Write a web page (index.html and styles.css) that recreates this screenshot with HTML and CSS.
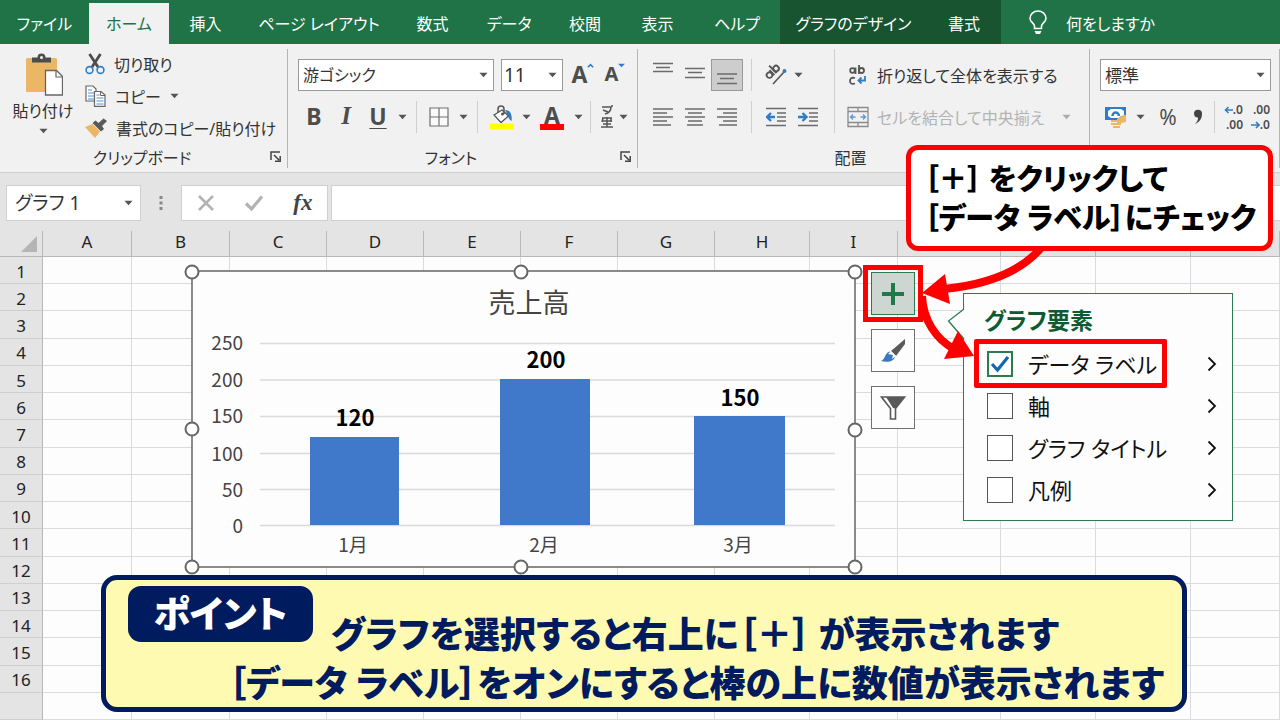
FILE: index.html
```html
<!DOCTYPE html>
<html lang="ja">
<head>
<meta charset="utf-8">
<title>グラフ要素 - データ ラベル</title>
<link rel="stylesheet" href="styles.css">
</head>
<body>
<svg class="defs" aria-hidden="true">
  <symbol id="caret" viewBox="0 0 10 6"><path d="M0.5 0.5h9L5 5.5z" fill="currentColor"/></symbol>
  <symbol id="launcher" viewBox="0 0 12 12"><path d="M1 9V1h9M4 4l5 5M10.200 5v5.200H5" fill="none" stroke="#444" stroke-width="1.500"/></symbol>
  <symbol id="chev" viewBox="0 0 10 16"><path d="M1.500 1.500L8 8l-6.500 6.500" fill="none" stroke="#111" stroke-width="1.800"/></symbol>
</svg>

<nav class="tabs" aria-label="リボン タブ">
  <button>ファイル</button>
  <button class="active">ホーム</button>
  <button>挿入</button>
  <button>ページ レイアウト</button>
  <button>数式</button>
  <button>データ</button>
  <button>校閲</button>
  <button>表示</button>
  <button>ヘルプ</button>
  <button class="context">グラフのデザイン</button>
  <button class="context">書式</button>
  <button class="tell">
    <svg width="20" height="26" viewBox="0 0 20 26" aria-hidden="true"><path d="M6.500 18.500v-2.500C6.500 13.500 2 12 2 8.500a8 7.500 0 0 1 16 0C18 12 13.500 13.500 13.500 16v2.500z" fill="none" stroke="#fff" stroke-width="1.600"/><path d="M6.500 21h7l-1.500 3h-4z" fill="#fff"/></svg>
    何をしますか
  </button>
</nav>

<header class="ribbon">
  <section class="group clip">
    <div class="clip-body">
      <button class="paste">
        <svg width="40" height="44" viewBox="0 0 40 44" aria-hidden="true"><rect x="3" y="5" width="31" height="34" rx="1.500" fill="#ebb765"/><path d="M9 9.500V4.500h5.500a4 4 0 0 1 8 0H28v5z" fill="#4d4d4d"/><circle cx="18.500" cy="4.500" r="1.500" fill="#f1f1f1"/><path d="M22.500 17.500h11l6 6V42h-17z" fill="#fff" stroke="#666" stroke-width="1.300"/><path d="M33 17.500V24h6.500" fill="none" stroke="#666" stroke-width="1.200"/></svg>
        <span>貼り付け</span>
        <svg class="caret"><use href="#caret"/></svg>
      </button>
      <div class="clip-list">
        <button><svg width="20" height="22" viewBox="0 0 20 22" aria-hidden="true"><path d="M4.500 1l8.500 13M15.500 1L7 14" stroke="#4d4d4d" stroke-width="2.800" fill="none"/><circle cx="4.500" cy="17" r="3.400" fill="none" stroke="#2f7dc8" stroke-width="1.600"/><circle cx="15.500" cy="17" r="3.400" fill="none" stroke="#2f7dc8" stroke-width="1.600"/></svg>切り取り</button>
        <button><svg width="21" height="22" viewBox="0 0 21 22" aria-hidden="true"><path d="M1 1h7l3 3v12H1z" fill="#fff" stroke="#666" stroke-width="1.200"/><path d="M3 5h4M3 8h6M3 11h6M3 14h6" stroke="#4a90d6"/><path d="M9.500 6.500H16l4 3.500v11.400H9.500z" fill="#fff" stroke="#666" stroke-width="1.200"/><path d="M15.500 6.500V10.500H20" fill="none" stroke="#666"/><path d="M11.500 10h3M11.500 13h7M11.500 16h7M11.500 19h7" stroke="#4a90d6"/></svg>コピー<svg class="caret"><use href="#caret"/></svg></button>
        <button><svg width="22" height="22" viewBox="0 0 22 22" aria-hidden="true"><path d="M0 10l7.500-3 7.500 7.500L10 21z" fill="#ebb765"/><path d="M7.500 6l3-2.500 3 2.500L18.500 1.500 22 4l-5 5 2 3-3 2.500z" fill="#595959"/></svg>書式のコピー/貼り付け</button>
      </div>
    </div>
    <div class="foot"><span>クリップボード</span><svg class="launch"><use href="#launcher"/></svg></div>
  </section>

  <section class="group font">
    <div class="rows">
      <div class="row">
        <span class="combo font-name"><select aria-label="フォント"><option>游ゴシック</option></select><svg class="caret"><use href="#caret"/></svg></span>
        <span class="combo font-size"><select aria-label="フォント サイズ"><option>11</option></select><svg class="caret"><use href="#caret"/></svg></span>
        <button class="tool glyph" aria-label="フォント サイズの拡大">A<svg class="tick" viewBox="0 0 8 5"><path d="M1 4.500l3-3 3 3" fill="none" stroke="#2f7dc8" stroke-width="1.800"/></svg></button>
        <button class="tool glyph small" aria-label="フォント サイズの縮小">A<svg class="tick" viewBox="0 0 8 5"><path d="M0 .5h8l-4 4z" fill="#2f7dc8"/></svg></button>
      </div>
      <div class="row">
        <button class="tool glyph">B</button>
        <button class="tool glyph italic">I</button>
        <button class="tool glyph under">U</button>
        <button class="drop wide" aria-label="下線の種類"><svg class="caret"><use href="#caret"/></svg></button>
        <i class="sep"></i>
        <button class="tool" aria-label="罫線"><svg width="20" height="20" viewBox="0 0 20 20"><path d="M1 1h18v18H1zM10 1v18M1 10h18" fill="#fafafa" stroke="#707070" stroke-width="1.200"/></svg></button>
        <button class="drop wide" aria-label="罫線の種類"><svg class="caret"><use href="#caret"/></svg></button>
        <i class="sep"></i>
        <button class="tool w36" aria-label="塗りつぶしの色"><svg width="24" height="26" viewBox="0 0 24 26"><path d="M15 6c5 0 7.500 4 6.500 11-2-1-3-3-4-6z" fill="#2f7dc8"/><path d="M4 11l8-5 6.500 6-7.500 6.500z" fill="#fff" stroke="#555" stroke-width="1.300"/><path d="M8 8.500V5a3 3 0 0 1 6 0v5" fill="none" stroke="#555" stroke-width="1.500"/><circle cx="12.500" cy="10" r="1.500" fill="#555"/><path d="M0 19.500h24v6H0z" fill="#ff0"/></svg></button>
        <button class="drop" aria-label="塗りつぶしの色の一覧"><svg class="caret"><use href="#caret"/></svg></button>
        <button class="tool w40 glyph color">A</button>
        <button class="drop" aria-label="フォントの色の一覧"><svg class="caret"><use href="#caret"/></svg></button>
        <i class="sep"></i>
        <button class="tool w20" aria-label="ふりがな"><svg width="14" height="24" viewBox="0 0 14 24"><path d="M2 2h9c0 4-2 6-6 7M3 5l5 2M12 0v2M2 13h10M2 16h10M3 13l-1 4M7 12v10M1 22h12M3 19h8M11 13v4" fill="none" stroke="#555" stroke-width="1.500"/></svg></button>
        <button class="drop" aria-label="ふりがなの一覧"><svg class="caret"><use href="#caret"/></svg></button>
      </div>
    </div>
    <div class="foot"><span>フォント</span><svg class="launch"><use href="#launcher"/></svg></div>
  </section>

  <section class="group align">
    <div class="align-body">
      <div class="rows">
        <div class="row">
          <button class="tool" aria-label="上揃え"><svg width="20" height="32" viewBox="0 0 20 32"><path d="M0 4.500h20M3 8.500h14M0 12.500h20" stroke="#6b6b6b" stroke-width="1.500"/></svg></button>
          <button class="tool" aria-label="上下中央揃え"><svg width="20" height="32" viewBox="0 0 20 32"><path d="M0 9.500h20M3 13.500h14M0 18.500h20" stroke="#6b6b6b" stroke-width="1.500"/></svg></button>
          <button class="tool pressed" aria-label="下揃え"><svg width="20" height="32" viewBox="0 0 20 32"><path d="M0 15h20M3 19.500h14M0 24.500h20" stroke="#6b6b6b" stroke-width="1.500"/></svg></button>
          <i class="sep"></i>
          <button class="tool" aria-label="方向"><svg width="22" height="24" viewBox="0 0 22 24"><g transform="rotate(-45 8 10)" fill="none" stroke="#555" stroke-width="1.900"><circle cx="4" cy="9" r="2.800"/><path d="M7.500 5.500v7M10.500 2v10.500"/><circle cx="13.300" cy="9" r="2.800"/></g><path d="M8 21L19 9" stroke="#555" stroke-width="1.600"/><circle cx="19.500" cy="8" r="2" fill="#2f7dc8"/></svg></button>
          <button class="drop" aria-label="方向の一覧"><svg class="caret"><use href="#caret"/></svg></button>
        </div>
        <div class="row">
          <button class="tool" aria-label="左揃え"><svg width="20" height="18" viewBox="0 0 20 18"><path d="M0 1h20M0 5h14M0 9h20M0 13h14M0 17h18" stroke="#6b6b6b" stroke-width="1.500"/></svg></button>
          <button class="tool" aria-label="中央揃え"><svg width="20" height="18" viewBox="0 0 20 18"><path d="M0 1h20M3 5h14M0 9h20M3 13h14M2 17h16" stroke="#6b6b6b" stroke-width="1.500"/></svg></button>
          <button class="tool" aria-label="右揃え"><svg width="20" height="18" viewBox="0 0 20 18"><path d="M0 1h20M6 5h14M0 9h20M6 13h14M2 17h18" stroke="#6b6b6b" stroke-width="1.500"/></svg></button>
          <i class="sep"></i>
          <button class="tool" aria-label="インデントを減らす"><svg width="20" height="20" viewBox="0 0 20 20"><path d="M0 1.500h20M11 6h9M11 10h9M11 14h9M0 18.500h20" stroke="#6b6b6b" stroke-width="1.500"/><path d="M9 10H1.500M5 6l-4 4 4 4" fill="none" stroke="#2f7dc8" stroke-width="2.400"/></svg></button>
          <button class="tool" aria-label="インデントを増やす"><svg width="20" height="20" viewBox="0 0 20 20"><path d="M0 1.500h20M11 6h9M11 10h9M11 14h9M0 18.500h20" stroke="#6b6b6b" stroke-width="1.500"/><path d="M0 10h8M4.500 6l4 4-4 4" fill="none" stroke="#2f7dc8" stroke-width="2.400"/></svg></button>
        </div>
      </div>
      <div class="rows wrap-col">
        <button class="row wide-tool"><svg width="22" height="22" viewBox="0 0 22 22" aria-hidden="true"><g fill="none" stroke="#555" stroke-width="1.800"><circle cx="5.500" cy="6.500" r="2.300"/><path d="M8.500 3.500V10M12 1v9"/><circle cx="14.500" cy="6.500" r="2.500"/><path d="M8 14c-4-1-5 1-5 3s1 3.500 5 2.500"/></g><path d="M18 12v4.500h-6M14.500 13.500l-3 3 3 3" fill="none" stroke="#2f7dc8" stroke-width="1.800"/></svg>折り返して全体を表示する</button>
        <button class="row wide-tool off"><svg width="22" height="22" viewBox="0 0 22 22" aria-hidden="true"><path d="M1 1.500h20v19H1zM1 5.500h20M1 16.500h20M11 1.500v4M11 16.500v4" fill="none" stroke="#8a8a8a" stroke-width="1.300"/><path d="M3.500 11h5M13.500 11h5M6 8.500L3.500 11 6 13.500M16 8.500l2.500 2.500-2.500 2.500" fill="none" stroke="#5c98d6" stroke-width="1.300"/></svg>セルを結合して中央揃え<svg class="caret"><use href="#caret"/></svg></button>
      </div>
    </div>
    <div class="foot"><span>配置</span></div>
  </section>

  <section class="group number">
    <div class="rows">
      <div class="row"><span class="combo format"><select aria-label="表示形式"><option>標準</option></select><svg class="caret"><use href="#caret"/></svg></span></div>
      <div class="row">
        <button class="tool" aria-label="通貨表示形式"><svg width="24" height="22" viewBox="0 0 24 22"><path d="M1 1h21v13H1z" fill="#2f7dc8"/><path d="M4 5l3-2h10l3 2v5h-3l-2 2H7l-3-2z" fill="#fff"/><path d="M8.500 10a3.200 3.500 0 0 1 6.400 0" fill="none" stroke="#2f7dc8" stroke-width="2.500"/><path d="M13 13l7-4.500 2 1v6.500l-9 2z" fill="#ebb765"/><path d="M7 15h10M7 18h10M9 21h7" stroke="#ebb765" stroke-width="2.200"/></svg></button>
        <button class="drop wide" aria-label="通貨の一覧"><svg class="caret"><use href="#caret"/></svg></button>
        <button class="tool w40 percent">%</button>
        <button class="tool w20" aria-label="桁区切り"><svg width="10" height="16" viewBox="0 0 10 16"><path d="M1 4.500a4 3.800 0 0 1 8 0C9 10 6.500 13 2 15c2-2 3.200-4 3-6.500C2.500 8.700 1 7 1 4.500z" fill="#444"/></svg></button>
        <i class="sep"></i>
        <button class="dec"><span><svg width="9" height="8" viewBox="0 0 9 8"><path d="M9 4H1.500M4.500 1l-3 3 3 3" fill="none" stroke="#2f7dc8" stroke-width="1.600"/></svg>.0</span><span>.00</span></button>
        <button class="dec"><span>.00</span><span><svg width="9" height="8" viewBox="0 0 9 8"><path d="M0 4h8M5 1l3 3-3 3" fill="none" stroke="#2f7dc8" stroke-width="1.600"/></svg>.0</span></button>
      </div>
    </div>
    <div class="foot"><span></span><svg class="launch"><use href="#launcher"/></svg></div>
  </section>
</header>

<div class="formula">
  <span class="combo name-box"><select aria-label="名前ボックス"><option>グラフ 1</option></select><svg class="caret"><use href="#caret"/></svg></span>
  <svg class="dots" width="4" height="16" viewBox="0 0 4 16" aria-hidden="true"><path d="M.5 1h3v3h-3zM.5 6.500h3v3h-3zM.5 12h3v3h-3z" fill="#888"/></svg>
  <div class="fx">
    <button aria-label="キャンセル"><svg width="18" height="18" viewBox="0 0 18 18"><path d="M2 2l14 14M16 2L2 16" stroke="#b3b3b3" stroke-width="2.600"/></svg></button>
    <button aria-label="入力"><svg width="20" height="18" viewBox="0 0 20 18"><path d="M2 9.500l5.500 5.500L18 2.500" fill="none" stroke="#b3b3b3" stroke-width="3.200"/></svg></button>
    <button class="fx-label">fx</button>
  </div>
  <input class="formula-input" aria-label="数式バー">
</div>

<main class="sheet">
  <table>
    <colgroup><col class="c-head"><col class="c90"><col class="c98"><col class="c97"><col class="c97"><col class="c97"><col class="c97"><col class="c97"><col class="c95"><col class="c88"><col class="c103"><col class="c95"><col class="c95"><col></colgroup>
    <thead><tr><th class="corner"><svg width="18" height="18" viewBox="0 0 18 18" aria-hidden="true"><path d="M17 1v16H1z" fill="#b5b5b5"/></svg></th><th>A</th><th>B</th><th>C</th><th>D</th><th>E</th><th>F</th><th>G</th><th>H</th><th>I</th><th></th><th></th><th></th><th></th></tr></thead>
    <tbody>
      <tr><th>1<td><td><td><td><td><td><td><td><td><td><td><td><td></tr>
      <tr><th>2<td><td><td><td><td><td><td><td><td><td><td><td><td></tr>
      <tr><th>3<td><td><td><td><td><td><td><td><td><td><td><td><td></tr>
      <tr><th>4<td><td><td><td><td><td><td><td><td><td><td><td><td></tr>
      <tr><th>5<td><td><td><td><td><td><td><td><td><td><td><td><td></tr>
      <tr><th>6<td><td><td><td><td><td><td><td><td><td><td><td><td></tr>
      <tr><th>7<td><td><td><td><td><td><td><td><td><td><td><td><td></tr>
      <tr><th>8<td><td><td><td><td><td><td><td><td><td><td><td><td></tr>
      <tr><th>9<td><td><td><td><td><td><td><td><td><td><td><td><td></tr>
      <tr><th>10<td><td><td><td><td><td><td><td><td><td><td><td><td></tr>
      <tr><th>11<td><td><td><td><td><td><td><td><td><td><td><td><td></tr>
      <tr><th>12<td><td><td><td><td><td><td><td><td><td><td><td><td></tr>
      <tr><th>13<td><td><td><td><td><td><td><td><td><td><td><td><td></tr>
      <tr><th>14<td><td><td><td><td><td><td><td><td><td><td><td><td></tr>
      <tr><th>15<td><td><td><td><td><td><td><td><td><td><td><td><td></tr>
      <tr><th>16<td><td><td><td><td><td><td><td><td><td><td><td><td></tr>
      <tr><th><td><td><td><td><td><td><td><td><td><td><td><td><td></tr>
    </tbody>
  </table>
</main>

<svg class="chart" width="663" height="296" viewBox="0 0 663 296" role="img" aria-label="売上高 棒グラフ">
  <rect width="663" height="296" fill="#fdfdfd" stroke="#6e6e6e" stroke-width="1.600"/>
  <text class="chart-title" x="337" y="42">売上高</text>
  <path d="M68 72.500h575M68 109h575M68 145.500h575M68 182.500h575M68 218.500h575M68 254.500h575" stroke="#d9dade" stroke-width="1.500"/>
  <g class="axis end"><text x="51" y="79">250</text><text x="51" y="116">200</text><text x="51" y="152">150</text><text x="51" y="190">100</text><text x="51" y="226">50</text><text x="51" y="262">0</text></g>
  <g fill="#4079ca"><rect x="118" y="166" width="89" height="88"/><rect x="308" y="108" width="90" height="146"/><rect x="502" y="145" width="91" height="109"/></g>
  <g class="value"><text x="163" y="155">120</text><text x="354" y="97">200</text><text x="548" y="135">150</text></g>
  <g class="axis"><text x="161" y="281">1月</text><text x="352" y="281">2月</text><text x="546" y="281">3月</text></g>
  <g fill="#fff" stroke="#666" stroke-width="2"><circle cx="0" cy="1" r="6.500"/><circle cx="329" cy="1" r="6.500"/><circle cx="663" cy="1" r="6.500"/><circle cx="0" cy="158" r="6.500"/><circle cx="663" cy="159" r="6.500"/><circle cx="0" cy="296" r="6.500"/><circle cx="329" cy="296" r="6.500"/><circle cx="663" cy="296" r="6.500"/></g>
</svg>

<div class="chart-tools">
  <button class="plus" aria-label="グラフ要素"><svg width="22" height="22" viewBox="0 0 22 22"><path d="M11 0v22M0 11h22" stroke="#1f7a4a" stroke-width="4"/></svg></button>
  <button aria-label="グラフ スタイル"><svg width="26" height="26" viewBox="0 0 26 26"><path d="M25 1v5l-9 12-5-5z" fill="#595959"/><path d="M1 23c4-1 4-9 9-9.500l5 4.500c0 5-7 7-14 5z" fill="#3c78c2"/><path d="M8 16l3-3 5 5-4 3 1-4z" fill="#fff"/></svg></button>
  <button aria-label="グラフ フィルター"><svg width="26" height="26" viewBox="0 0 26 26"><path d="M1.500 2h23L15.500 13.500V24h-5V13.500z" fill="#fff" stroke="#595959" stroke-width="1.600"/><path d="M6 2h18.500L15.500 13.500 13 13z" fill="#595959"/></svg></button>
</div>

<aside class="elements">
  <svg class="pointer" width="18" height="32" viewBox="0 0 18 32" aria-hidden="true"><path d="M17 1L1.500 13 17 31" fill="#fdfdfd" stroke="#2b7a50" stroke-width="1.300"/></svg>
  <h2>グラフ要素</h2>
  <label class="item"><input type="checkbox" checked><span>データ ラベル</span><svg class="chev"><use href="#chev"/></svg></label>
  <label class="item"><input type="checkbox"><span>軸</span><svg class="chev"><use href="#chev"/></svg></label>
  <label class="item"><input type="checkbox"><span>グラフ タイトル</span><svg class="chev"><use href="#chev"/></svg></label>
  <label class="item"><input type="checkbox"><span>凡例</span><svg class="chev"><use href="#chev"/></svg></label>
</aside>

<svg class="arrows" width="200" height="160" viewBox="0 0 200 160" aria-hidden="true">
  <path d="M181 8C163 29 133 44 84 49" fill="none" stroke="#f00" stroke-width="8"/>
  <path d="M62 53L85 34l5 30z" fill="#f00"/>
  <path d="M62 56C63 80 76 99 94 109" fill="none" stroke="#f00" stroke-width="8"/>
  <path d="M114 116L98 91l-14 28z" fill="#f00"/>
  <rect x="5.500" y="27.500" width="55" height="52" fill="none" stroke="#f00" stroke-width="5"/>
</svg>
<div class="mark-item"></div>

<p class="callout">［<span class="full">＋</span>］ をクリックして<br>［データ ラベル］にチェック</p>

<section class="point">
  <h1>ポイント</h1>
  <p class="line-one">グラフを選択すると右上に［<span class="full">＋</span>］ が表示されます</p>
  <p class="line-two">［データ ラベル］をオンにすると棒の上に数値が表示されます</p>
</section>
</body>
</html>
```
FILE: styles.css
```css
* { box-sizing: border-box; }

body {
  position: relative;
  display: flex;
  flex-direction: column;
  min-height: 100vh;
  margin: 0;
  overflow: hidden;
  background: #e4e4e4;
  color: #333;
  font-family: "Noto Sans", "Noto Sans CJK JP", sans-serif;
  font-size: 16px;
  font-feature-settings: "palt";
}

button, select, input {
  margin: 0;
  padding: 0;
  border: 0;
  background: none;
  color: inherit;
  font: inherit;
  font-feature-settings: inherit;
  white-space: nowrap;
}

h1, h2, p { margin: 0; }

.defs { position: absolute; width: 0; height: 0; }
.caret { flex: none; width: 9px; height: 6px; color: #555; }

/* Tabs */
.tabs {
  display: grid;
  grid-template-columns: 89px 80px 73px 154px 73px 80px 72px 73px 86px 147px 74px 1fr;
  height: 44px;
  padding-top: 3px;
  background: #207346;
  color: #fff;
}
.tabs button { padding-bottom: 1px; }
.tabs .active { background: #f1f1f1; color: #207346; }
.tabs .context { margin-top: -3px; padding-top: 3px; background: #17542f; }
.tabs .tell { display: flex; align-items: center; gap: 18px; padding-left: 27px; }

/* Ribbon */
.ribbon {
  display: flex;
  height: 129px;
  padding: 5px 0 4px;
  border-bottom: 1px solid #cfcfcf;
  background: #f1f1f1;
}
.group {
  display: flex;
  flex-direction: column;
  justify-content: space-between;
  border-right: 1px solid #b5b5b5;
}
.clip { width: 288px; }
.font { width: 350px; padding-left: 10px; }
.align { width: 452px; padding-left: 9px; }
.number { flex: 1; padding-left: 10px; }

.foot { display: flex; align-items: center; height: 22px; padding-right: 5px; }
.foot span { flex: 1; text-align: center; }
.clip .foot { padding-left: 14px; }
.font .foot span { padding-right: 16px; }
.align .foot { padding-right: 35px; }
.launch { width: 12px; height: 12px; }

.clip-body { display: flex; gap: 10px; padding-left: 11px; }
.paste { display: flex; flex-direction: column; align-items: center; gap: 2px; width: 64px; padding-top: 4px; }
.paste span { line-height: 24px; }
.paste .caret { margin-top: 3px; }
.clip-list { display: flex; flex-direction: column; }
.clip-list button { display: flex; align-items: center; gap: 9px; height: 32px; padding-bottom: 3px; }

.rows { display: flex; flex-direction: column; gap: 10px; padding-top: 10px; }
.row { display: flex; align-items: center; height: 32px; }

.combo { position: relative; display: flex; border: 1px solid #999; background: #fff; }
.combo select { width: 100%; height: 30px; padding: 0 4px; appearance: none; outline: 0; }
.combo .caret { position: absolute; top: 12px; right: 5px; pointer-events: none; }
.font-name { width: 196px; margin-right: 7px; }
.font-size { width: 62px; margin-right: 4px; }
.combo.font-size select { padding: 0 2px; font-size: 19px; }
.format { width: 171px; }
.format select { font-size: 17px; }

.tool { display: flex; align-items: center; justify-content: center; width: 32px; height: 32px; }
.w20 { width: 20px; }
.w36 { width: 36px; }
.w40 { width: 40px; }
.drop { display: flex; align-items: center; justify-content: center; width: 12px; height: 32px; }
.drop.wide { width: 16px; }
.pressed { border: 1px solid #999; background: #cdcdcd; }
.sep { width: 1px; height: 32px; margin: 0 6px; background: #cfcfcf; }

.glyph { padding-bottom: 2px; color: #4d4d4d; font-size: 23px; font-weight: 700; line-height: 30px; }
.glyph.small { font-size: 20px; }
.glyph.italic { font-family: "Liberation Serif", serif; font-style: italic; font-size: 25px; }
.glyph.under { text-decoration: underline; text-decoration-thickness: 1px; text-underline-offset: 3px; }
.glyph.color { position: relative; padding-bottom: 5px; }
.glyph.color::after { content: ""; position: absolute; bottom: 3px; width: 24px; height: 6px; background: #f00; }
.tick { flex: none; align-self: flex-start; width: 7px; height: 5px; margin-top: 4px; }
.percent { color: #4d4d4d; font-size: 21px; }

.align-body { display: flex; }
.align .rows .sep { margin: 0 8px; }
.align .rows:first-child { width: 187px; }
.wrap-col { border-left: 1px solid #cfcfcf; }
.wide-tool { gap: 8px; padding-left: 12px; }
.wide-tool .caret { margin-left: 10px; }
.off { color: #b3b3b3; }
.off .caret { color: #aaa; }

.dec { display: flex; flex-direction: column; align-items: flex-end; width: 22px; margin-right: 5px; color: #4d4d4d; font-size: 12px; font-weight: 600; line-height: 15px; }

/* Formula bar */
.formula { display: flex; align-items: center; padding: 12px 0 10px 6px; }
.name-box { width: 135px; height: 36px; border-color: #cfcfcf; }
.name-box select { height: 34px; padding-left: 8px; font-size: 19px; }
.name-box .caret { top: 14px; right: 7px; }
.dots { margin: 0 18px; }
.fx { display: grid; grid-template-columns: repeat(3, 1fr); width: 147px; height: 36px; border: 1px solid #cfcfcf; background: #fff; }
.fx button { display: flex; align-items: center; justify-content: center; }
.fx .fx-label { color: #444; font-family: "Liberation Serif", serif; font-size: 23px; font-style: italic; font-weight: 700; }
.formula-input { flex: 1; height: 36px; margin-left: 3px; border: 1px solid #cfcfcf; border-right: 0; background: #fff; }

/* Sheet */
.sheet { display: grid; flex: 1; }
table { width: 100%; border-collapse: separate; border-spacing: 0; table-layout: fixed; }
.c-head { width: 43px; }
.c88 { width: 88px; }
.c90 { width: 89px; }
.c95 { width: 95px; }
.c97 { width: 97px; }
.c98 { width: 98px; }
.c103 { width: 103px; }
th, td { padding: 0; border-right: 1px solid #d9dbde; border-bottom: 1px solid #d9dbde; }
td { background: #fdfdfd; }
th { border-color: #b8b8b8; background: #e4e4e4; color: #222; font-size: 17px; font-weight: 400; line-height: 22px; }
tbody th { padding-top: 3px; border-bottom-color: #cfcfcf; }
tbody tr { height: 27px; }
thead th { height: 26px; padding-bottom: 3px; }
thead .corner { padding: 0 4px 0 0; }
.corner svg { display: block; margin-left: auto; }

/* Floating chart and its tools */
.chart { position: absolute; left: 192px; top: 271px; overflow: visible; font-family: "Noto Sans CJK JP", sans-serif; }
.chart text { fill: #444; text-anchor: middle; }
.chart .chart-title { font-size: 27px; }
.chart .axis { font-size: 19px; }
.chart .end text { text-anchor: end; }
.chart .value text { fill: #000; font-size: 22px; font-weight: 700; }

.chart-tools { position: absolute; left: 871px; top: 272px; display: flex; flex-direction: column; gap: 14px; }
.chart-tools button { display: flex; align-items: center; justify-content: center; width: 44px; height: 43px; border: 1px solid #707070; background: #fdfdfd; }
.chart-tools .plus { border-color: #2b7a50; background: #cdd6d1; }

.elements {
  position: absolute;
  left: 963px;
  top: 293px;
  width: 270px;
  padding: 8px 15px 9px 23px;
  border: 1px solid #2b7a50;
  background: #fdfdfd;
  color: #111;
}
.elements h2 { margin-left: -3px; padding-bottom: 5px; color: #0e5a32; font-size: 23px; font-weight: 700; line-height: 36px; }
.pointer { position: absolute; left: -17px; top: 14px; }
.item { display: flex; align-items: center; height: 42px; font-size: 22px; }
.item input { flex: none; width: 26px; height: 26px; margin-right: 15px; appearance: none; border: 1px solid #555; background: #fff; }
.item input:checked {
  border: 2px solid #2b7a50;
  background: url("data:image/svg+xml,%3Csvg xmlns='http://www.w3.org/2000/svg' viewBox='0 0 22 22'%3E%3Cpath d='M3 11l5.500 6L19 4' fill='none' stroke='%231467ad' stroke-width='3.200'/%3E%3C/svg%3E") center / 22px no-repeat #fff;
}
.item span { flex: 1; padding-bottom: 2px; white-space: nowrap; }
.chev { width: 10px; height: 16px; }

/* Annotations */
.full { font-feature-settings: normal; }
.arrows { position: absolute; left: 860px; top: 240px; }
.mark-item { position: absolute; left: 974px; top: 339px; width: 193px; height: 49px; border: 5px solid #f00; border-radius: 2px; }
.callout {
  position: absolute;
  left: 906px;
  top: 145px;
  width: 367px;
  padding: 8px 0 10px 13px;
  border: 5px solid #f00;
  border-radius: 12px;
  background: #fff;
  color: #000;
  font-family: "Noto Sans CJK JP", sans-serif;
  font-size: 29px;
  font-weight: 900;
  line-height: 39px;
  white-space: nowrap;
}
.point {
  position: absolute;
  left: 101px;
  top: 575px;
  display: grid;
  grid-template-columns: 185px 1fr;
  column-gap: 18px;
  width: 1086px;
  height: 137px;
  padding: 6px 18px 0 22px;
  border: 5px solid #001b5e;
  border-radius: 16px;
  background: #fffab2;
  color: #001b5e;
  font-family: "Noto Sans CJK JP", sans-serif;
  font-weight: 900;
  white-space: nowrap;
}
.point h1 { height: 56px; border-radius: 13px; background: #001b5e; color: #fff; font-size: 37px; font-weight: 900; line-height: 53px; text-align: center; }
.point p { font-size: 36px; line-height: 46px; }
.point .line-one { padding-top: 23px; }
.point .line-two { grid-column: 1 / -1; justify-self: end; }
```
